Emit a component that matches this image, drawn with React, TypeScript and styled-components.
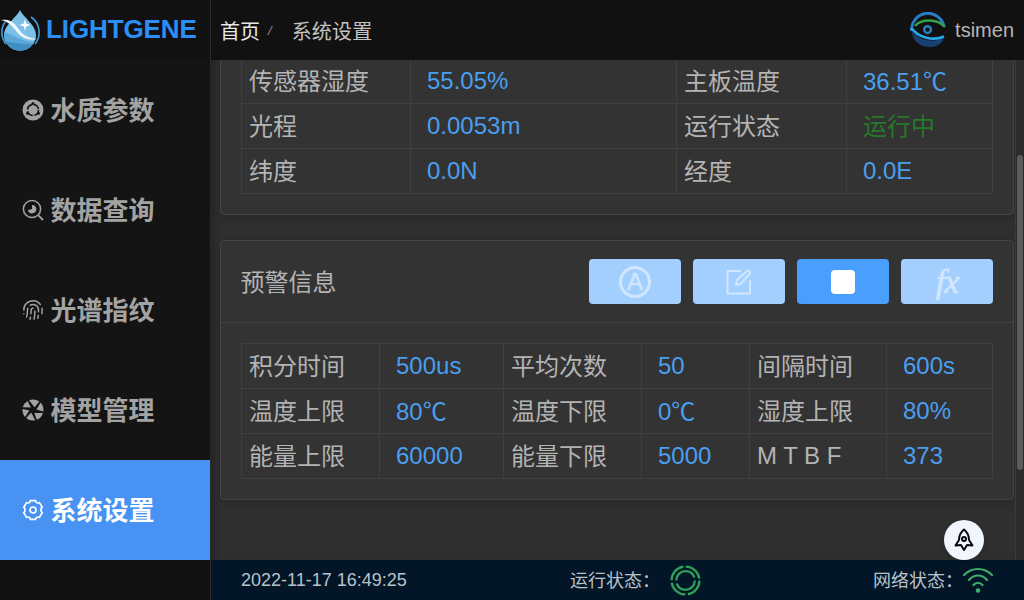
import React, { useLayoutEffect, useRef } from "react";
import styled, { createGlobalStyle } from "styled-components";
import { Fingerprint } from "lucide-react";

const FONT = `"Liberation Sans", "Noto Sans CJK SC", sans-serif`;

const Global = createGlobalStyle`
  html, body { margin: 0; padding: 0; background: #111; }
  body { font-family: ${FONT}; }
  * { box-sizing: border-box; }
`;

const Page = styled.div`
  width: 1024px;
  height: 600px;
  display: grid;
  grid-template-columns: 211px 1fr;
  overflow: hidden;
  position: relative;
  background: #2f2f2f;
`;

const Sidebar = styled.aside`
  background: #141414;
  border-right: 1px solid #2b2b2b;
  display: flex;
  flex-direction: column;
`;

const Brand = styled.div`
  height: 60px;
  background: #111;
  display: flex;
  align-items: center;
  gap: 6px;
`;

const BrandName = styled.span`
  font-size: 26px;
  font-weight: 700;
  color: #2b8ff5;
  margin-bottom: 2px;
  letter-spacing: -0.1px;
`;

const NavItem = styled.div<{ $active?: boolean }>`
  height: 100px;
  display: flex;
  align-items: center;
  gap: 7px;
  padding-left: 22px;
  font-size: 26px;
  font-weight: 700;
  color: ${(p) => (p.$active ? "#fff" : "#a3a3a3")};
  background: ${(p) => (p.$active ? "#4892f4" : "transparent")};
`;

const NavIcon = styled.span`
  width: 22px;
  height: 22px;
  display: flex;
  align-items: center;
  justify-content: center;
`;

const NavLabel = styled.span`
  margin-left: -0.5px;
  padding-bottom: 4px;
`;

const SidebarFoot = styled.div`
  flex: 1;
  background: #111;
`;

const Column = styled.div`
  display: grid;
  grid-template-rows: 60px 500px 40px;
  min-width: 0;
`;

const TopBar = styled.header`
  background: #111;
  display: flex;
  align-items: center;
  padding: 0 10px 0 9px;
  font-size: 20px;
`;

const Crumb = styled.span<{ $current?: boolean }>`
  color: ${(p) => (p.$current ? "#c4c4c4" : "#e8e8e8")};
  letter-spacing: ${(p) => (p.$current ? "0.2px" : "0")};
`;

const CrumbSep = styled.span`
  color: #8a8a8a;
  font-size: 13px;
  font-style: italic;
  margin: 0 20px 0 8px;
`;

const User = styled.div`
  margin-left: auto;
  display: flex;
  align-items: center;
  gap: 9px;
  color: #b5b5b5;
`;

const Scroller = styled.main`
  overflow-y: scroll;
  background: #2f2f2f;
  padding: 0 10px 203px 9px;
  box-shadow: inset 6px 0 6px -4px #222;
`;

const ScrollRail = styled.div`
  position: absolute;
  left: 1015px;
  top: 60px;
  width: 9px;
  height: 500px;
  padding: 95px 2px 0 1px;
  background: #292b2d;
  border-left: 1px solid #3a3a3a;
`;

const ScrollThumb = styled.div`
  width: 6px;
  height: 315px;
  background: #5c5c5c;
  border-radius: 3px;
`;

const Card = styled.section`
  background: #333;
  border: 1px solid #444;
  border-radius: 4px;
  box-shadow: 0 2px 8px rgba(0, 0, 0, 0.18);
  & + & { margin-top: 25px; }
`;

const CardBody = styled.div<{ $top: number }>`
  padding: ${(p) => p.$top}px 20px 20px;
`;

const CardHead = styled.div`
  height: 82px;
  border-bottom: 1px solid #414141;
  display: flex;
  align-items: center;
  justify-content: space-between;
  padding: 0 20px;
`;

const CardTitle = styled.h3`
  margin: 0 0 0 -0.5px;
  padding-bottom: 3px;
  font-size: 24px;
  font-weight: 400;
  color: #b4b4b4;
`;

const Buttons = styled.div`
  display: flex;
  gap: 12px;
`;

const ActionBtn = styled.button<{ $on?: boolean }>`
  width: 92px;
  height: 45px;
  padding: 0;
  border: 0;
  border-radius: 4px;
  background: ${(p) => (p.$on ? "#4a9efe" : "#a3cffe")};
  display: flex;
  align-items: center;
  justify-content: center;
  color: #d2e7ff;
  font-family: ${FONT};
`;

const CircleA = styled.span`
  width: 32px;
  height: 32px;
  border: 3px solid #d2e7ff;
  border-radius: 50%;
  display: flex;
  align-items: center;
  justify-content: center;
  font-size: 24px;
  -webkit-text-stroke: 0.5px #d2e7ff;
  line-height: 1;
`;

const StopMark = styled.span`
  width: 24px;
  height: 24px;
  background: #fff;
  border-radius: 4px;
`;

const FxMark = styled.span`
  font-family: "Liberation Serif", serif;
  font-style: italic;
  font-size: 34px;
  line-height: 1;
  -webkit-text-stroke: 0.7px #d2e7ff;
  letter-spacing: -1px;
`;

const Table = styled.div<{ $cols: string }>`
  display: grid;
  grid-template-columns: ${(p) => p.$cols};
  grid-auto-rows: 45px;
  border-top: 1px solid #404040;
  border-left: 1px solid #404040;
`;

const Cell = styled.div`
  border-right: 1px solid #404040;
  border-bottom: 1px solid #404040;
  display: flex;
  align-items: center;
  font-size: 24px;
  white-space: nowrap;
`;

const Label = styled(Cell)<{ $latin?: boolean }>`
  padding-left: 7px;
  padding-bottom: ${(p) => (p.$latin ? "0" : "3px")};
  color: #b4b4b4;
`;

const Value = styled(Cell)<{ $ok?: boolean; $lift?: boolean }>`
  padding-left: 16px;
  padding-bottom: ${(p) => (p.$lift ? "4px" : "0")};
  color: ${(p) => (p.$ok ? "#257a28" : "#4a9ff0")};
`;

const Foot = styled.footer`
  background: #021628;
  display: grid;
  grid-template-columns: 329px 303px 1fr;
  align-items: center;
  padding-left: 30px;
  font-size: 18px;
  color: #b9c2c8;
`;

const FootItem = styled.div`
  display: flex;
  align-items: center;
`;

const FootLabel = styled.span<{ $gap: number }>`
  margin-right: ${(p) => p.$gap}px;
  padding-bottom: 2px;
`;

const RocketBtn = styled.div`
  position: absolute;
  left: 944px;
  top: 520px;
  width: 40px;
  height: 40px;
  border-radius: 50%;
  background: #f1f5fe;
  display: flex;
  align-items: center;
  justify-content: center;
  box-shadow: 0 1px 4px rgba(0, 0, 0, 0.2);
`;

const Logo = () => (
  <svg width="40" height="42" viewBox="0 0 40 42">
    <defs>
      <clipPath id="drop">
        <path d="M20 1 C23 8 36 16 36 26 A16 15.5 0 0 1 4 26 C4 16 17 8 20 1Z" />
      </clipPath>
    </defs>
    <path d="M5 13 A18.5 18.5 0 0 0 6 35" fill="none" stroke="#3f9ed6" strokeWidth="1.6" />
    <path d="M31 8 A18.5 18.5 0 0 1 35 35" fill="none" stroke="#3f9ed6" strokeWidth="1.6" />
    <g clipPath="url(#drop)">
      <rect width="40" height="42" fill="#7cc0e8" />
      <path d="M0 22 C12 24 22 34 40 34 V42 H0Z" fill="#5aa7d8" />
      <path d="M0 32 C12 32 24 38 40 34 V42 H0Z" fill="#3f8fc4" />
    </g>
    <path d="M1 11 C13 9 16 17 21 23 C25 28 31 29 37 30 C29 32 22 29 17 23 C12 17 9 13 1 11Z" fill="#f2f7fb" />
    <path d="M25 10 L26.2 14.5 L30.5 16 L26.2 17.5 L25 22 L23.8 17.5 L19.5 16 L23.8 14.5Z" fill="#fff" />
  </svg>
);

const WaterIcon = () => (
  <svg width="22" height="22" viewBox="0 0 22 22">
    <circle cx="11" cy="11" r="10.5" fill="#a3a3a3" />
    <circle cx="11" cy="11" r="5.5" fill="none" stroke="#141414" strokeWidth="1.6" strokeDasharray="7 1.6" />
    <circle cx="11" cy="4.6" r="1.5" fill="#141414" />
    <circle cx="5.5" cy="14.2" r="1.5" fill="#141414" />
    <circle cx="16.5" cy="14.2" r="1.5" fill="#141414" />
  </svg>
);

const QueryIcon = () => (
  <svg width="22" height="22" viewBox="0 0 22 22" fill="none">
    <circle cx="10" cy="10" r="8.6" stroke="#a3a3a3" strokeWidth="1.5" />
    <path d="M16.4 16.4 L21 21" stroke="#a3a3a3" strokeWidth="1.8" />
    <path d="M10 6 A4.2 4.2 0 1 1 6 11 L10 10Z" fill="#a3a3a3" />
  </svg>
);

const ModelIcon = () => (
  <svg width="22" height="22" viewBox="0 0 22 22" fill="#a3a3a3">
    <path d="M7 1.3 A10.5 10.5 0 0 1 17.3 2.6 L12.6 8.3Z" />
    <path d="M18.6 3.6 A10.5 10.5 0 0 1 21.3 12.6 L14.4 10.4Z" />
    <path d="M21 14 A10.5 10.5 0 0 1 14.8 20.8 L12.3 14Z" />
    <path d="M13.2 21.3 A10.5 10.5 0 0 1 4.2 19 L9.2 13.5Z" />
    <path d="M3 18 A10.5 10.5 0 0 1 0.6 10 L7.4 11.6Z" />
    <path d="M0.8 8.2 A10.5 10.5 0 0 1 5.6 2 L8.8 8.4Z" />
  </svg>
);

const GearIcon = () => (
  <svg width="22" height="22" viewBox="0 0 22 22" fill="none" stroke="#fff" strokeWidth="1.7">
    <path d="M8.4 1.6 L13.6 1.6 C13.8 3.6 15.8 4.6 17.4 3.6 L20.2 8.2 C18.6 9.2 18.6 12.6 20.2 13.8 L17.4 18.4 C15.8 17.4 13.8 18.4 13.6 20.4 L8.4 20.4 C8.2 18.4 6.2 17.4 4.6 18.4 L1.8 13.8 C3.4 12.6 3.4 9.2 1.8 8.2 L4.6 3.6 C6.2 4.6 8.2 3.6 8.4 1.6Z" />
    <circle cx="11" cy="11" r="3" />
  </svg>
);

const EditIcon = () => (
  <svg width="26" height="26" viewBox="0 0 26 26" fill="none" stroke="#d2e7ff" strokeWidth="2">
    <path d="M15 2 H1.5 V24.5 H24 V11" />
    <path d="M10 16 L11 11 L21 2 C22.5 1 24.5 3 24 4.5 L14.5 15Z" strokeLinejoin="round" />
  </svg>
);

const Avatar = () => (
  <svg width="36" height="36" viewBox="0 0 36 36" fill="none">
    <path d="M1.5 19 A16.5 16.5 0 0 1 34 14" stroke="#2a7cc4" strokeWidth="3" />
    <path d="M2 19 C2 38 30 40 34 26 C26 30 10 30 2 19Z" fill="#173f70" />
    <path d="M5 14 C11 7 27 6 35 15" stroke="#35a24a" strokeWidth="2.4" />
    <path d="M1.5 16 C8 26 24 29 34 24.5" stroke="#2aa7e6" strokeWidth="2.6" />
    <circle cx="17.6" cy="17.6" r="3.4" stroke="#2a7fc4" strokeWidth="2.4" />
  </svg>
);

const Spinner = () => (
  <svg width="31" height="31" viewBox="0 0 32 32" fill="none" stroke="#2f9e57">
    <circle cx="16" cy="16" r="14.4" strokeWidth="2.4" strokeDasharray="20 2.6" />
    <circle cx="16" cy="16" r="9.6" strokeWidth="2.4" strokeDasharray="27 3" />
  </svg>
);

const Wifi = () => (
  <svg width="32" height="26" viewBox="0 0 32 26" fill="none" stroke="#3fae68" strokeWidth="2.2" strokeLinecap="round">
    <path d="M2 8 C10 0 22 0 30 8" />
    <path d="M7 13 C12 7 20 7 25 13" />
    <path d="M11.5 18 C14 15 18 15 20.5 18" />
    <circle cx="16" cy="23.5" r="1.2" fill="#3fae68" />
  </svg>
);

const Rocket = () => (
  <svg width="20" height="24" viewBox="0 0 20 24" fill="none" stroke="#0b0b0b" strokeWidth="2" strokeLinejoin="round">
    <path d="M10 1.5 C13 4 15 8 15 12 L18.5 17.5 L13 17 L10 22 L7 17 L1.5 17.5 L5 12 C5 8 7 4 10 1.5Z" />
    <circle cx="10" cy="11" r="2" />
  </svg>
);

const navItems = [
  { label: "水质参数", icon: <WaterIcon /> },
  { label: "数据查询", icon: <QueryIcon /> },
  { label: "光谱指纹", icon: <Fingerprint size={22} color="#a3a3a3" strokeWidth={1.6} /> },
  { label: "模型管理", icon: <ModelIcon /> },
  { label: "系统设置", icon: <GearIcon />, active: true },
];

const deviceRows = [
  ["传感器湿度", "55.05%", "主板温度", "36.51℃"],
  ["光程", "0.0053m", "运行状态", "运行中"],
  ["纬度", "0.0N", "经度", "0.0E"],
];

const alertRows = [
  ["积分时间", "500us", "平均次数", "50", "间隔时间", "600s"],
  ["温度上限", "80℃", "温度下限", "0℃", "湿度上限", "80%"],
  ["能量上限", "60000", "能量下限", "5000", "M T B F", "373"],
];

const renderRows = (rows: string[][]) =>
  rows.flat().map((text, i) =>
    i % 2 === 0 ? (
      <Label key={i} $latin={text === "M T B F"}>
        {text}
      </Label>
    ) : (
      <Value key={i} $ok={text === "运行中"} $lift={/℃|运行中/.test(text)}>
        {text}
      </Value>
    )
  );

export default function App() {
  const scroller = useRef<HTMLElement>(null);
  useLayoutEffect(() => {
    if (scroller.current) scroller.current.scrollTop = 151;
  }, []);

  return (
    <Page>
      <Global />
      <Sidebar>
        <Brand>
          <Logo />
          <BrandName>LIGHTGENE</BrandName>
        </Brand>
        {navItems.map((n) => (
          <NavItem key={n.label} $active={n.active}>
            <NavIcon>{n.icon}</NavIcon>
            <NavLabel>{n.label}</NavLabel>
          </NavItem>
        ))}
        <SidebarFoot />
      </Sidebar>
      <Column>
        <TopBar>
          <Crumb>首页</Crumb>
          <CrumbSep>/</CrumbSep>
          <Crumb $current>系统设置</Crumb>
          <User>
            <Avatar />
            tsimen
          </User>
        </TopBar>
        <Scroller ref={scroller}>
          <Card>
            <CardBody $top={148}>
              <Table $cols="169px 266px 170px 146px">{renderRows(deviceRows)}</Table>
            </CardBody>
          </Card>
          <Card>
            <CardHead>
              <CardTitle>预警信息</CardTitle>
              <Buttons>
                <ActionBtn>
                  <CircleA>A</CircleA>
                </ActionBtn>
                <ActionBtn>
                  <EditIcon />
                </ActionBtn>
                <ActionBtn $on>
                  <StopMark />
                </ActionBtn>
                <ActionBtn>
                  <FxMark>fx</FxMark>
                </ActionBtn>
              </Buttons>
            </CardHead>
            <CardBody $top={20}>
              <Table $cols="138px 124px 138px 108px 137px 106px">{renderRows(alertRows)}</Table>
            </CardBody>
          </Card>
        </Scroller>
        <Foot>
          <FootItem>2022-11-17 16:49:25</FootItem>
          <FootItem>
            <FootLabel $gap={10}>运行状态：</FootLabel>
            <Spinner />
          </FootItem>
          <FootItem>
            <FootLabel $gap={-1}>网络状态：</FootLabel>
            <Wifi />
          </FootItem>
        </Foot>
      </Column>
      <ScrollRail>
        <ScrollThumb />
      </ScrollRail>
      <RocketBtn>
        <Rocket />
      </RocketBtn>
    </Page>
  );
}
